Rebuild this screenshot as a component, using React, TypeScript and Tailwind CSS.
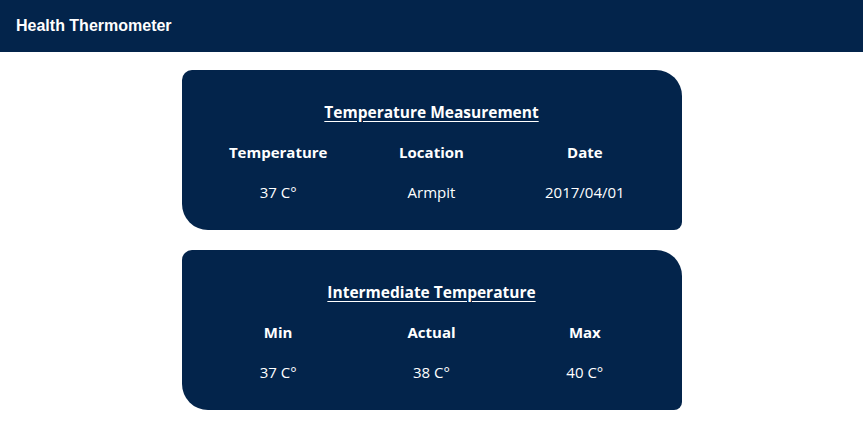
import React from "react";

const cards = [
  {
    title: "Temperature Measurement",
    heads: ["Temperature", "Location", "Date"],
    vals: ["37 C°", "Armpit", "2017/04/01"],
  },
  {
    title: "Intermediate Temperature",
    heads: ["Min", "Actual", "Max"],
    vals: ["37 C°", "38 C°", "40 C°"],
  },
];

export default function App() {
  return (
    <div className="min-h-[424px] bg-white">
      <header className="h-[52px] bg-[#03244b] flex items-center px-4">
        <h1 className="text-white font-bold text-[16px] font-['Liberation_Sans',Arial,sans-serif]">
          Health Thermometer
        </h1>
      </header>
      <main className="flex flex-col items-center gap-5 pt-[18px] font-['Open_Sans',sans-serif] text-white">
        {cards.map((c) => (
          <section
            key={c.title}
            className="w-[500px] h-[160px] bg-[#03244b] rounded-tl-[10px] rounded-tr-[26px] rounded-bl-[26px] rounded-br-[8px] px-5 pt-[30px]"
          >
            <h2 className="text-center font-bold text-[15.5px] leading-6 underline underline-offset-[3px]">
              {c.title}
            </h2>
            <div className="grid grid-cols-3 mt-[16px] text-center text-[15px] leading-6">
              {c.heads.map((h) => (
                <div key={h} className="font-bold">
                  {h}
                </div>
              ))}
            </div>
            <div className="grid grid-cols-3 mt-[16px] text-center text-[15px] leading-6">
              {c.vals.map((v, i) => (
                <div key={i}>{v}</div>
              ))}
            </div>
          </section>
        ))}
      </main>
    </div>
  );
}
